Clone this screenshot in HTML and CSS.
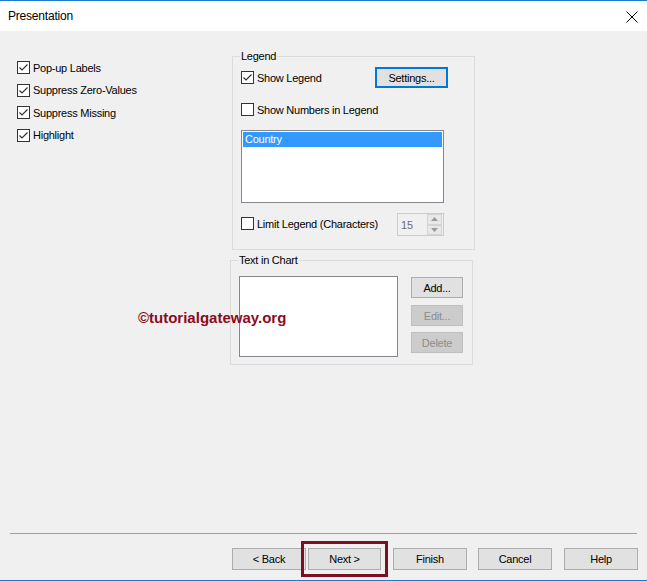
FILE: index.html
```html
<!DOCTYPE html>
<html>
<head>
<meta charset="utf-8">
<link rel="stylesheet" href="styles.css">
</head>
<body>
<div class="window">
  <div class="titlebar">
    <span class="title">Presentation</span>
    <svg class="close" width="12" height="12" viewBox="0 0 12 12"><path d="M0.5 0.5 L11.5 11.5 M11.5 0.5 L0.5 11.5" stroke="#000" stroke-width="1"/></svg>
  </div>
  <div class="content">
    <div class="left">
      <div class="check"><span class="box"><svg width="13" height="13" viewBox="0 0 13 13"><path d="M2.5 6.5 L5 9 L10.5 3.5" fill="none" stroke="#333" stroke-width="1.2"/></svg></span><span class="lbl">Pop-up Labels</span></div>
      <div class="check"><span class="box"><svg width="13" height="13" viewBox="0 0 13 13"><path d="M2.5 6.5 L5 9 L10.5 3.5" fill="none" stroke="#333" stroke-width="1.2"/></svg></span><span class="lbl">Suppress Zero-Values</span></div>
      <div class="check"><span class="box"><svg width="13" height="13" viewBox="0 0 13 13"><path d="M2.5 6.5 L5 9 L10.5 3.5" fill="none" stroke="#333" stroke-width="1.2"/></svg></span><span class="lbl">Suppress Missing</span></div>
      <div class="check"><span class="box"><svg width="13" height="13" viewBox="0 0 13 13"><path d="M2.5 6.5 L5 9 L10.5 3.5" fill="none" stroke="#333" stroke-width="1.2"/></svg></span><span class="lbl">Highlight</span></div>
    </div>
    <div class="right">
      <fieldset class="group legend-group">
        <legend>Legend</legend>
        <div class="row row1">
          <div class="check"><span class="box"><svg width="13" height="13" viewBox="0 0 13 13"><path d="M2.5 6.5 L5 9 L10.5 3.5" fill="none" stroke="#333" stroke-width="1.2"/></svg></span><span class="lbl">Show Legend</span></div>
          <button class="btn default">Settings...</button>
        </div>
        <div class="row row2">
          <div class="check"><span class="box"></span><span class="lbl">Show Numbers in Legend</span></div>
        </div>
        <div class="listbox legend-list">
          <div class="item selected">Country</div>
        </div>
        <div class="row row3">
          <div class="check"><span class="box"></span><span class="lbl">Limit Legend (Characters)</span></div>
          <div class="spin">
            <span class="spin-val">15</span>
            <div class="spin-btns">
              <span class="spin-btn"><svg width="7" height="4" viewBox="0 0 7 4"><path d="M0 4 L3.5 0 L7 4 Z" fill="#9a9a9a"/></svg></span>
              <span class="spin-btn"><svg width="7" height="4" viewBox="0 0 7 4"><path d="M0 0 L3.5 4 L7 0 Z" fill="#9a9a9a"/></svg></span>
            </div>
          </div>
        </div>
      </fieldset>
      <fieldset class="group text-group">
        <legend>Text in Chart</legend>
        <div class="text-body">
          <div class="listbox text-list"></div>
          <div class="side-btns">
            <button class="btn small">Add...</button>
            <button class="btn small disabled b2">Edit...</button>
            <button class="btn small disabled b3">Delete</button>
          </div>
        </div>
      </fieldset>
    </div>
    <div class="watermark">©tutorialgateway.org</div>
  </div>
  <div class="footer">
    <div class="sep"></div>
    <div class="buttons">
      <button class="btn wide">&lt; Back</button>
      <button class="btn wide next">Next &gt;</button>
      <button class="btn wide finish">Finish</button>
      <button class="btn wide cancel">Cancel</button>
      <button class="btn wide help">Help</button>
    </div>
  </div>
</div>
</body>
</html>
```

FILE: styles.css
```css
html, body {
  margin: 0;
  padding: 0;
}
body {
  width: 647px;
  height: 581px;
  overflow: hidden;
  font-family: "Liberation Sans", Arial, sans-serif;
  font-size: 11px;
  color: #000;
}
.window {
  box-sizing: border-box;
  width: 647px;
  height: 581px;
  border-top: 1px solid #1a7bd0;
  border-bottom: 1px solid #1a7bd0;
  display: flex;
  flex-direction: column;
  background: #f0f0f0;
}
.titlebar {
  height: 30px;
  flex: none;
  background: #fff;
  display: flex;
  align-items: center;
  justify-content: space-between;
  padding: 0 9px 0 8px;
}
.title {
  font-size: 12px;
  letter-spacing: -0.2px;
}
.close {
  display: block;
  margin-top: 1px;
}
.content {
  flex: 1;
  display: flex;
  position: relative;
}
.left {
  width: 215px;
  padding: 30px 0 0 17px;
  display: flex;
  flex-direction: column;
  gap: 9.67px;
}
.check {
  display: flex;
  align-items: center;
  height: 13px;
}
.box {
  box-sizing: border-box;
  width: 13px;
  height: 13px;
  border: 1px solid #333;
  background: #fff;
  flex: none;
  position: relative;
}
.box svg {
  position: absolute;
  left: -1px;
  top: -1px;
}
.lbl {
  margin-left: 3px;
  letter-spacing: -0.25px;
  white-space: nowrap;
}
.right {
  padding-top: 19px;
  display: flex;
  flex-direction: column;
}
.group {
  box-sizing: border-box;
  width: 243px;
  margin: 0;
  border: 1px solid #dcdcdc;
  padding: 0 0 0 8px;
  min-width: 0;
}
.group legend {
  padding: 0 1px;
  margin-left: -1px;
  line-height: 13px;
  letter-spacing: -0.25px;
}
.legend-group {
  padding-bottom: 13px;
}
.row {
  display: flex;
  align-items: center;
}
.row1 {
  margin-top: 4px;
  height: 21px;
}
.row1 .check {
  width: 134px;
}
.row2 {
  margin-top: 15px;
  height: 13px;
}
.row3 {
  margin-top: 10px;
  height: 23px;
}
.row3 .check {
  width: 156px;
  margin-bottom: 2px;
}
.btn {
  box-sizing: border-box;
  font-family: "Liberation Sans", Arial, sans-serif;
  font-size: 11px;
  letter-spacing: -0.25px;
  background: #e1e1e1;
  border: 1px solid #adadad;
  color: #000;
  padding: 0;
  margin: 0;
}
.btn.default {
  width: 73px;
  height: 21px;
  border: 2px solid #0078d7;
}
.listbox {
  box-sizing: border-box;
  border: 1px solid #828790;
  background: #fff;
}
.legend-list {
  margin-top: 14px;
  width: 203px;
  height: 73px;
  padding: 1px;
}
.item {
  height: 15px;
  line-height: 15px;
  padding-left: 2px;
  letter-spacing: -0.25px;
}
.item.selected {
  background: #3399ff;
  color: #fff;
}
.spin {
  box-sizing: border-box;
  width: 47px;
  height: 23px;
  border: 1px solid #cccccc;
  background: #f0f0f0;
  display: flex;
  align-items: center;
  justify-content: space-between;
}
.spin-val {
  color: #6d6d6d;
  padding-left: 3px;
  font-size: 11px;
}
.spin-btns {
  display: flex;
  flex-direction: column;
  height: 21px;
  margin-right: 1px;
}
.spin-btn {
  box-sizing: border-box;
  width: 15px;
  height: 10.5px;
  border: 1px solid #d4d4d4;
  background: #e8e8e8;
  display: flex;
  align-items: center;
  justify-content: center;
}
.text-group {
  margin-top: 4px;
  margin-left: -2px;
  padding-bottom: 7px;
}
.text-body {
  display: flex;
  margin-top: 9px;
}
.text-list {
  width: 159px;
  height: 81px;
}
.side-btns {
  margin-left: 13px;
  display: flex;
  flex-direction: column;
  padding-top: 1px;
}
.btn.small {
  width: 52px;
  height: 21px;
}
.btn.disabled {
  background: #cccccc;
  border-color: #bfbfbf;
  color: #8d8d8d;
}
.b2 { margin-top: 7px; }
.b3 { margin-top: 6px; }
.watermark {
  position: absolute;
  left: 138px;
  top: 278px;
  font-weight: bold;
  font-size: 15px;
  color: #8b0b1f;
  letter-spacing: 0px;
}
.footer {
  flex: none;
  padding-bottom: 10px;
}
.sep {
  height: 1px;
  margin: 0 10px;
  background: #a0a0a0;
}
.buttons {
  margin-top: 14px;
  display: flex;
  padding-left: 232px;
}
.btn.wide {
  width: 74px;
  height: 22px;
}
.btn.wide.next {
  width: 73px;
  margin-left: 2px;
  outline: 3px solid #7b1020;
  outline-offset: 4px;
}
.finish { margin-left: 12px; }
.cancel { margin-left: 11px; }
.help { margin-left: 12px; }
```
